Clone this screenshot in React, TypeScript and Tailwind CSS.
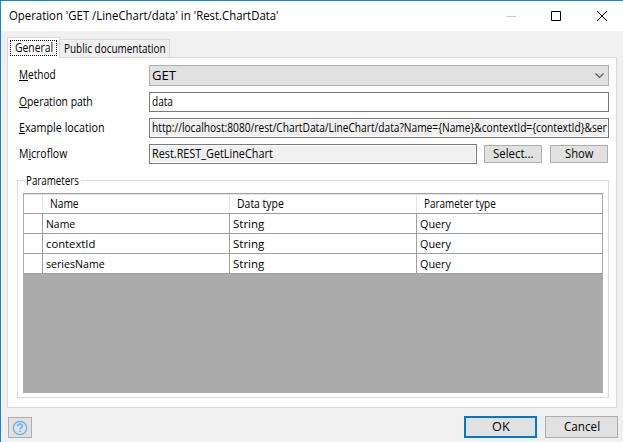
import { useLayoutEffect, useRef, useState } from "react";
import type { ReactNode } from "react";

// Condenses its text horizontally so that it takes exactly `width` pixels.
function Fit({ width, children }: { width: number; children: ReactNode }) {
  const ref = useRef<HTMLSpanElement>(null);
  const [scale, setScale] = useState(1);
  useLayoutEffect(() => {
    if (ref.current) setScale(width / ref.current.offsetWidth);
  }, [width]);
  return (
    <span className="inline-flex shrink-0 justify-start whitespace-nowrap" style={{ width }}>
      <span ref={ref} className="inline-block shrink-0 origin-left" style={{ transform: `scaleX(${scale})` }}>
        {children}
      </span>
    </span>
  );
}

function Row({ label, width, className, children }: { label: ReactNode; width: number; className: string; children: ReactNode }) {
  return (
    <div className={`flex ${className}`}>
      <div className="w-[130px] shrink-0 whitespace-nowrap leading-[20px]">
        <Fit width={width}>{label}</Fit>
      </div>
      {children}
    </div>
  );
}

function Key({ children }: { children: ReactNode }) {
  return <span className="underline decoration-1 underline-offset-[1px]">{children}</span>;
}

const rows = [
  { name: "Name", width: 29 },
  { name: "contextId", width: 49 },
  { name: "seriesName", width: 59 },
];

export default function App() {
  return (
    <div className="flex h-[442px] w-[623px] flex-col overflow-hidden border-l border-t border-[#1883d7] bg-[#f0f0f0] font-['Open_Sans',sans-serif] text-[12px] text-black">
      <header className="flex h-[30px] shrink-0 items-center bg-white pl-[8px]">
        <Fit width={270}>Operation 'GET /LineChart/data' in 'Rest.ChartData'</Fit>
        <svg className="ml-auto mr-[16px]" width="101" height="10" viewBox="0 0 101 10" fill="none" stroke="#000">
          <path d="M0 5.5h10" stroke="#ccc" />
          <path d="M45.5.5h9v9h-9z" />
          <path d="M91 0l10 10M101 0L91 10" />
        </svg>
      </header>

      <nav className="flex h-[26px] shrink-0 items-end pl-[6px] whitespace-nowrap">
        <div className="relative z-10 -mb-px h-[21px] w-[53px] border border-b-0 border-[#d9d9d9] bg-white px-[2px] pt-[2px]">
          <div className="h-[16px] w-[47px] border border-dotted border-black pl-[4px] leading-[13px]"><Fit width={38}>General</Fit></div>
        </div>
        <div className="h-[18px] w-[110px] border border-b-0 border-l-0 border-[#d9d9d9] pl-[4px] leading-[18px]">
          <Fit width={102}>Public documentation</Fit>
        </div>
      </nav>

      <main className="ml-[6px] flex h-[351px] w-[610px] shrink-0 flex-col border border-[#d9d9d9] bg-white pl-[11px] pt-[7px]">
        <Row className="h-[21px]" width={37} label={<><Key>M</Key>ethod</>}>
          <div className="flex h-[21px] w-[460px] shrink-0 items-center justify-between border border-[#adadad] bg-[#e1e1e1] pl-[2px] pr-[4px]">
            <Fit width={24}>GET</Fit>
            <svg width="9" height="6" viewBox="0 0 9 6" fill="none" stroke="#555" strokeWidth="1.1">
              <path d="M.5.5l4 4 4-4" />
            </svg>
          </div>
        </Row>
        <Row className="mt-[6px] h-[20px]" width={74} label={<><Key>O</Key>peration path</>}>
          <div className="h-[20px] w-[460px] shrink-0 border border-[#7a7a7a] pl-[2px] leading-[18px]"><Fit width={21}>data</Fit></div>
        </Row>
        <Row className="mt-[6px] h-[20px]" width={86} label={<><Key>E</Key>xample location</>}>
          <div className="flex h-[20px] w-[460px] shrink-0 border border-[#7a7a7a] bg-white p-px">
            <div className="w-full bg-[#f0f0f0] pl-px leading-[16px]">
              <Fit width={455}>http://localhost:8080/rest/ChartData/LineChart/data?Name={"{Name}"}&amp;contextId={"{contextId}"}&amp;ser</Fit>
            </div>
          </div>
        </Row>
        <Row className="mt-[6px] h-[20px]" width={48} label={<>M<Key>i</Key>croflow</>}>
          <div className="flex h-[20px] w-[328px] shrink-0 border border-[#7a7a7a] bg-white p-px">
            <div className="w-full bg-[#f0f0f0] pl-px leading-[16px]"><Fit width={121}>Rest.REST_GetLineChart</Fit></div>
          </div>
          <button className="ml-[7px] mt-px flex h-[18px] w-[58px] items-center justify-center border border-[#adadad] bg-[#e1e1e1]"><Fit width={41}>Select...</Fit></button>
          <button className="ml-[8px] mt-px flex h-[18px] w-[58px] items-center justify-center border border-[#adadad] bg-[#e1e1e1]"><Fit width={28}>Show</Fit></button>
        </Row>

        <section className="-ml-[2px] mt-[16px] h-[218px] w-[592px] border border-[#dcdcdc] pl-[5px]">
          <div className="-mt-[9px] ml-px h-[18px] w-[57px] bg-white pl-[2px] leading-[18px]"><Fit width={53}>Parameters</Fit></div>
          <div className="mt-[3px] h-[200px] w-[580px] border border-[#ababab] border-t-[#a0a0a0] bg-[#ababab]">
            <div className="grid h-[20px] grid-cols-[19px_187px_187px_185px] border-b border-[#a0a0a0] bg-white leading-[18px]">
              <div className="border-r border-t border-[#e5e5e5]" />
              <div className="border-r border-t border-[#e5e5e5] pl-[7px]"><Fit width={29}>Name</Fit></div>
              <div className="border-r border-t border-[#e5e5e5] pl-[7px]"><Fit width={47}>Data type</Fit></div>
              <div className="border-t border-[#e5e5e5] pl-[7px]"><Fit width={72}>Parameter type</Fit></div>
            </div>
            {rows.map(({ name, width }) => (
              <div key={name} className="grid h-[20px] grid-cols-[19px_187px_187px_185px] border-b border-[#a0a0a0] bg-white text-[11.5px] leading-[20px]">
                <div className="border-r border-[#a0a0a0]" />
                <div className="border-r border-[#a0a0a0] pl-[3px]"><Fit width={width}>{name}</Fit></div>
                <div className="border-r border-[#a0a0a0] pl-[3px]"><Fit width={31}>String</Fit></div>
                <div className="pl-[3px]"><Fit width={31}>Query</Fit></div>
              </div>
            ))}
          </div>
        </section>
      </main>

      <footer className="flex pl-[7px] pt-[8px]">
        <button className="mt-px flex h-[21px] w-[24px] items-center justify-center border border-[#adadad] bg-[#e1e1e1]">
          <svg width="16" height="16" viewBox="0 0 16 16" fill="none" stroke="#5cb3ee" strokeWidth="1.2">
            <circle cx="8" cy="8" r="6.7" />
            <path d="M5.8 6.2C5.8 3.4 10.3 3.5 10.3 6c0 1.7-2.2 1.7-2.2 3.5M8.1 10.7v1.4" strokeWidth="1.5" />
          </svg>
        </button>
        <button className="ml-[432px] flex h-[22px] w-[73px] items-center justify-center border-2 border-[#0078d7] bg-[#e1e1e1]"><Fit width={18}>OK</Fit></button>
        <button className="ml-[8px] flex h-[22px] w-[73px] items-center justify-center border border-[#adadad] bg-[#e1e1e1]"><Fit width={36}>Cancel</Fit></button>
      </footer>
    </div>
  );
}
